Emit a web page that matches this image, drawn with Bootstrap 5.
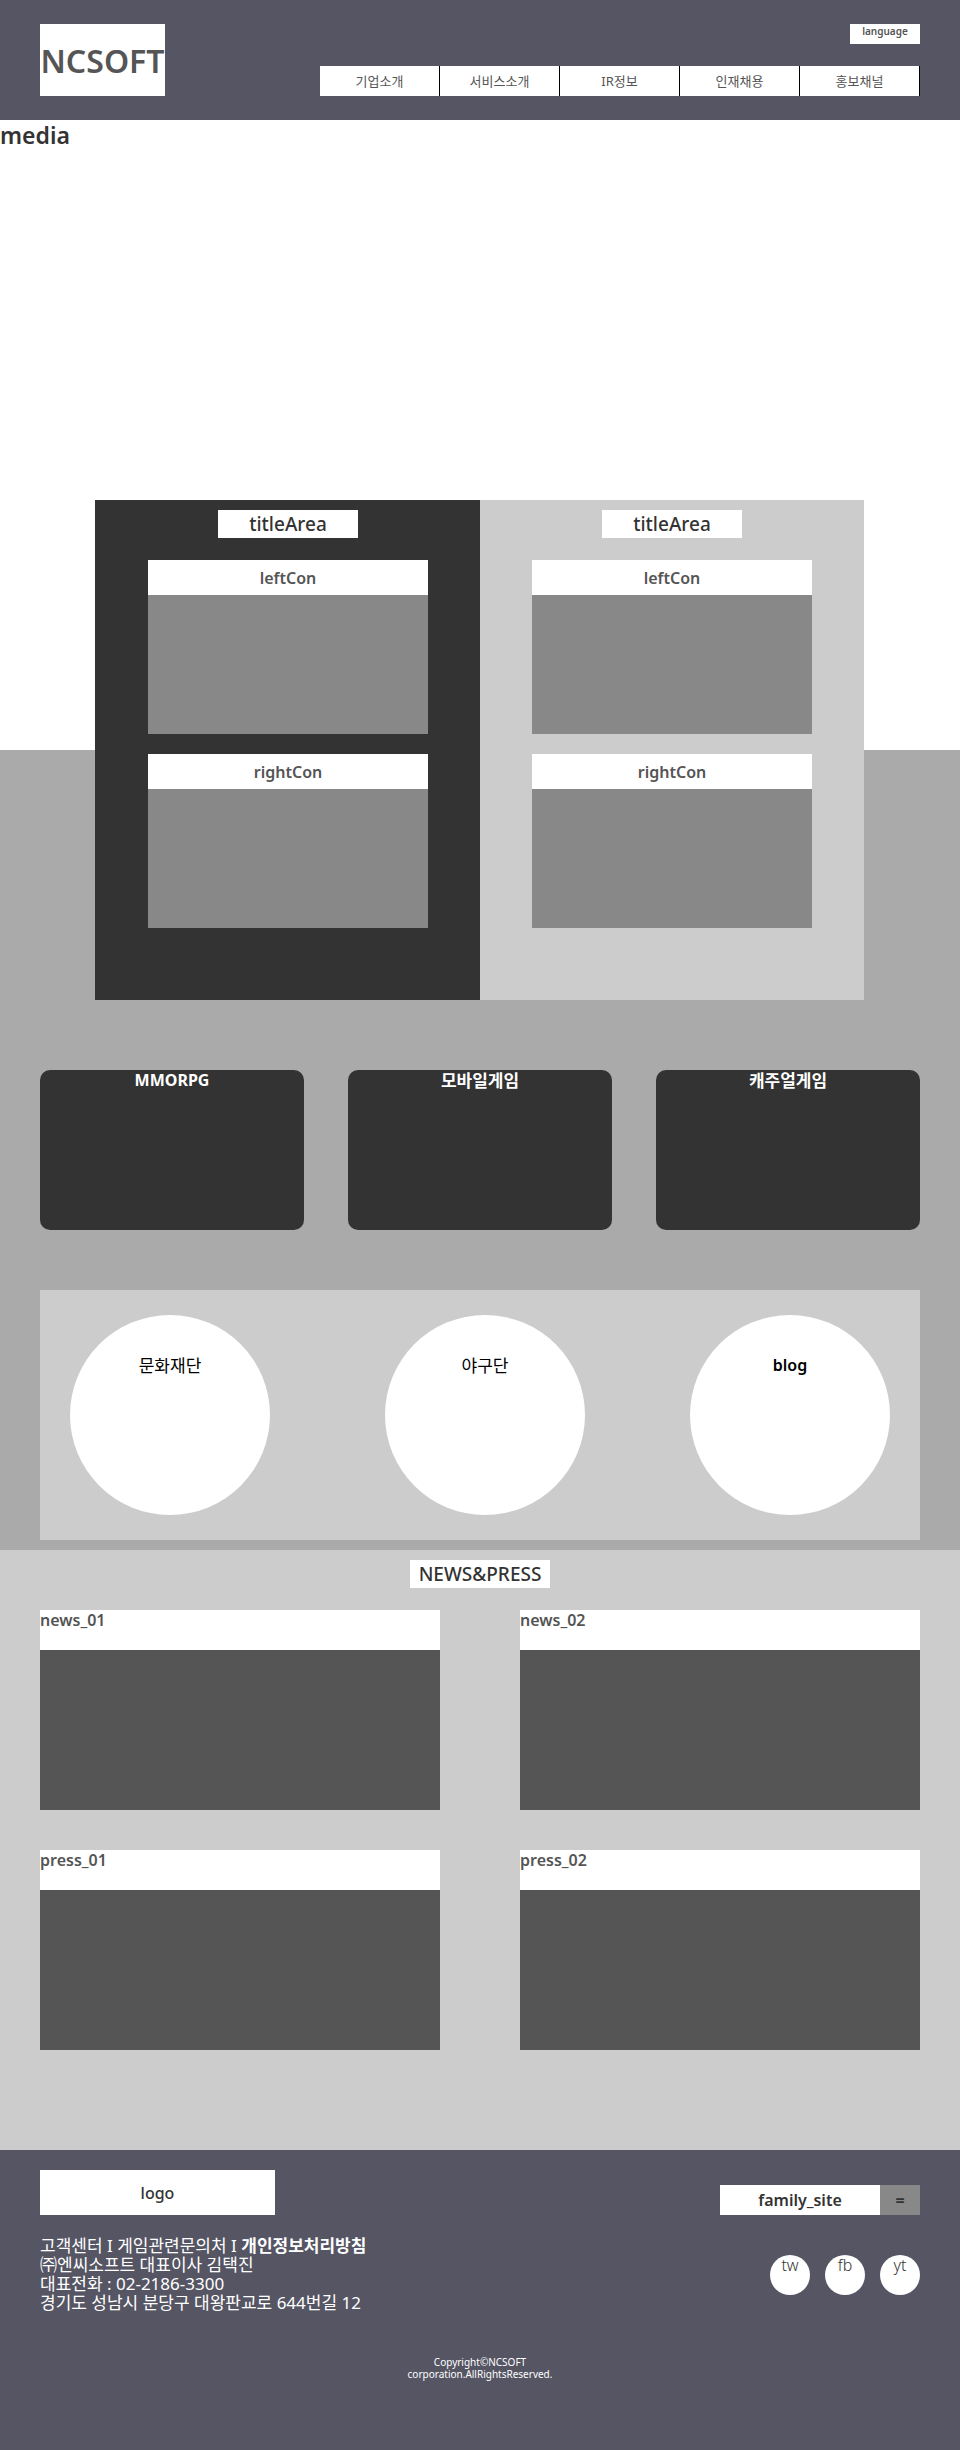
<!DOCTYPE html>
<html lang="ko">
<head>
<meta charset="utf-8">
<meta name="viewport" content="width=device-width, initial-scale=1">
<title>NCSOFT</title>
<link rel="stylesheet" href="https://cdn.jsdelivr.net/npm/bootstrap@5.3.0/dist/css/bootstrap.min.css">
<style>
  body { font-family: "Noto Sans", "Noto Sans CJK KR", sans-serif; font-size: 16px; line-height: 20px; color: #333; }
  h1, h2, h3, p { margin: 0; font-weight: 600; }
  a { color: inherit; text-decoration: none; }
  .wrap { padding-left: 40px; padding-right: 40px; }
  .bar { background: #555564; }
  .soft { background: #ccc; }
  .ko { font-size: 17px; }

  .brand { width: 125px; height: 72px; font-size: 32px; line-height: 74px; color: #555; }
  .lang { width: 70px; height: 20px; font-size: 10px; line-height: 14px; font-weight: 600; color: #555; }
  .menu { width: 600px; }
  .menu a { flex: 1 1 0; line-height: 30px; font-size: 13px; color: #555; border-right: 1px solid #000; }

  .media { height: 630px; }
  .media h2 { font-size: 23px; line-height: 30px; }

  /* the panels rise into the media area */
  .mid { display: flow-root; background: #aaa; padding-bottom: 10px; }
  .panels { width: 80%; margin: -250px auto 70px; }
  .panel { padding: 10px 0 72px; }
  .panel-dark { background: #333; box-shadow: -1px 0 #333; }
  .title { width: 140px; font-size: 19px; line-height: 28px; font-weight: 500; margin: 0 auto 22px; color: #333; }
  .con { width: 280px; max-width: 100%; }
  .con + .con { margin-top: 20px; }
  .con h3 { height: 35px; font-size: 16px; line-height: 37px; color: #555; }
  .con div { height: 139px; background: #888; }

  .game { width: 30%; height: 160px; border-radius: 10px; background: #333; color: #fff; font-size: 16px; line-height: 20px; font-weight: 700; }
  .game.ko { font-size: 17px; line-height: 22px; }
  .rounds { padding: 25px 30px; margin-top: 60px; }
  .round { width: 200px; height: 200px; padding-top: 40px; color: #000; font-weight: 600; }
  .round.ko { font-weight: 400; line-height: 22px; }
  .round-mid { margin-left: 10px; }

  .news { padding-top: 10px; padding-bottom: 100px; }
  .news-grid { gap: 40px 80px; grid-template-columns: 1fr 1fr; }
  .news-grid h3 { height: 40px; font-size: 16px; line-height: 20px; color: #555; }
  .news-grid article div { height: 160px; background: #555; }

  .foot { padding-top: 20px; padding-bottom: 70px; }
  .foot-logo { width: 235px; height: 45px; line-height: 47px; font-weight: 500; }
  .info { font-size: 17px; line-height: 19px; margin-top: 21px; color: #fff; }
  .family { width: 160px; line-height: 30px; font-weight: 600; color: #333; }
  .toggle { width: 40px; line-height: 30px; background: #888; color: #333; font-weight: 700; }
  .family-row { margin-top: 15px; }
  .sns { gap: 15px; margin-top: 40px; }
  .sns a { width: 40px; height: 40px; line-height: 20px; color: #333; font-weight: 300; }
  .copy { font-size: 10px; line-height: 12px; margin-top: 44px; color: #fff; font-weight: 400; }
</style>
</head>
<body>
<header class="bar wrap d-flex justify-content-between py-4">
  <h1 class="brand bg-white d-flex justify-content-center"><a href="#">NCSOFT</a></h1>
  <div class="d-flex flex-column justify-content-between align-items-end">
    <button type="button" class="lang bg-white border-0 p-0 d-flex justify-content-center">language</button>
    <nav class="menu d-flex text-center">
      <a class="bg-white" href="#">기업소개</a>
      <a class="bg-white" href="#">서비스소개</a>
      <a class="bg-white" href="#">IR정보</a>
      <a class="bg-white" href="#">인재채용</a>
      <a class="bg-white" href="#">홍보채널</a>
    </nav>
  </div>
</header>
<section class="media bg-white"><h2>media</h2></section>
<main>
  <section class="mid">
    <div class="panels d-flex">
      <div class="panel panel-dark w-50 text-center">
        <h2 class="title bg-white">titleArea</h2>
        <article class="con mx-auto"><h3 class="bg-white">leftCon</h3><div></div></article>
        <article class="con mx-auto"><h3 class="bg-white">rightCon</h3><div></div></article>
      </div>
      <div class="panel soft w-50 text-center">
        <h2 class="title bg-white">titleArea</h2>
        <article class="con mx-auto"><h3 class="bg-white">leftCon</h3><div></div></article>
        <article class="con mx-auto"><h3 class="bg-white">rightCon</h3><div></div></article>
      </div>
    </div>
    <div class="wrap">
      <div class="d-flex justify-content-between text-center">
        <h2 class="game">MMORPG</h2>
        <h2 class="game ko">모바일게임</h2>
        <h2 class="game ko">캐주얼게임</h2>
      </div>
      <div class="rounds soft d-flex justify-content-between text-center">
        <a class="round ko rounded-circle bg-white" href="#">문화재단</a>
        <a class="round round-mid ko rounded-circle bg-white" href="#">야구단</a>
        <a class="round rounded-circle bg-white" href="#">blog</a>
      </div>
    </div>
  </section>
  <section class="news soft wrap">
    <h2 class="title bg-white text-center">NEWS&amp;PRESS</h2>
    <div class="news-grid d-grid">
      <article><h3 class="bg-white">news_01</h3><div></div></article>
      <article><h3 class="bg-white">news_02</h3><div></div></article>
      <article><h3 class="bg-white">press_01</h3><div></div></article>
      <article><h3 class="bg-white">press_02</h3><div></div></article>
    </div>
  </section>
</main>
<footer class="foot bar wrap">
  <div class="d-flex justify-content-between align-items-start">
    <div>
      <div class="foot-logo bg-white text-center">logo</div>
      <address class="info mb-0">
        <a href="#">고객센터</a> I <a href="#">게임관련문의처</a> I <a class="fw-bold" href="#">개인정보처리방침</a><br>
        ㈜엔씨소프트 대표이사 김택진<br>
        대표전화 : 02-2186-3300<br>
        경기도 성남시 분당구 대왕판교로 644번길 12
      </address>
    </div>
    <div>
      <div class="family-row d-flex text-center">
        <a class="family bg-white" href="#">family_site</a>
        <button type="button" class="toggle border-0 p-0">=</button>
      </div>
      <nav class="sns d-flex justify-content-end text-center">
        <a class="rounded-circle bg-white" href="#">tw</a>
        <a class="rounded-circle bg-white" href="#">fb</a>
        <a class="rounded-circle bg-white" href="#">yt</a>
      </nav>
    </div>
  </div>
  <p class="copy text-center">Copyright©NCSOFT<br>corporation.AllRightsReserved.</p>
</footer>
<script src="https://cdn.jsdelivr.net/npm/bootstrap@5.3.0/dist/js/bootstrap.bundle.min.js"></script>
</body>
</html>
